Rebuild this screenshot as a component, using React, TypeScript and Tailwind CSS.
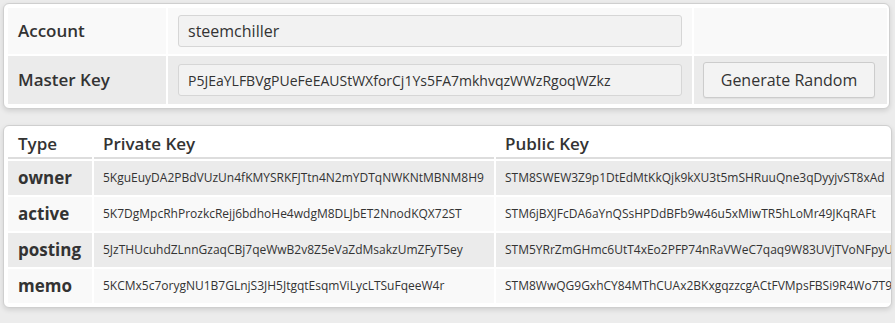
const keys = [
  {
    type: 'owner',
    priv: '5KguEuyDA2PBdVUzUn4fKMYSRKFJTtn4N2mYDTqNWKNtMBNM8H9',
    pub: 'STM8SWEW3Z9p1DtEdMtKkQjk9kXU3t5mSHRuuQne3qDyyjvST8xAd',
  },
  {
    type: 'active',
    priv: '5K7DgMpcRhProzkcRejj6bdhoHe4wdgM8DLJbET2NnodKQX72ST',
    pub: 'STM6jBXJFcDA6aYnQSsHPDdBFb9w46u5xMiwTR5hLoMr49JKqRAFt',
  },
  {
    type: 'posting',
    priv: '5JzTHUcuhdZLnnGzaqCBj7qeWwB2v8Z5eVaZdMsakzUmZFyT5ey',
    pub: 'STM5YRrZmGHmc6UtT4xEo2PFP74nRaVWeC7qaq9W83UVjTVoNFpyUc',
  },
  {
    type: 'memo',
    priv: '5KCMx5c7orygNU1B7GLnjS3JH5JtgqtEsqmViLycLTSuFqeeW4r',
    pub: 'STM8WwQG9GxhCY84MThCUAx2BKxgqzzcgACtFVMpsFBSi9R4Wo7T9',
  },
];

const font = { fontFamily: '"Open Sans", "Noto Sans", sans-serif' };

export default function App() {
  return (
    <div className="min-h-[323px] bg-[#ececec] p-[3px] text-[#333]" style={font}>
      {/* account / master key */}
      <div className="w-[887px] rounded-[6px] border border-[#cfcfcf] bg-white p-[4px] shadow-[0_2px_5px_rgba(0,0,0,0.12)]">
        <div className="grid grid-cols-[158px_524px_193px] gap-[2px]">
          <div className="flex h-[46px] items-center bg-[#f9f9f9] pl-[10px] text-[17px] font-semibold">Account</div>
          <div className="flex h-[46px] items-center bg-[#f9f9f9] pl-[10px]">
            <input
              readOnly
              value="steemchiller"
              className="h-[32px] w-[504px] rounded-[3px] border border-[#d6d6d6] bg-[#f2f2f2] px-[9px] text-[16px] text-[#333] outline-none"
              style={font}
            />
          </div>
          <div className="h-[46px] bg-[#f9f9f9]" />
          <div className="flex h-[48px] items-center bg-[#ebebeb] pl-[10px] text-[17px] font-semibold">Master Key</div>
          <div className="flex h-[48px] items-center bg-[#ebebeb] pl-[10px]">
            <input
              readOnly
              value="P5JEaYLFBVgPUeFeEAUStWXforCj1Ys5FA7mkhvqzWWzRgoqWZkz"
              className="h-[32px] w-[504px] rounded-[3px] border border-[#d6d6d6] bg-[#f2f2f2] px-[9px] text-[14px] text-[#333] outline-none"
              style={font}
            />
          </div>
          <div className="flex h-[48px] items-center bg-[#ebebeb] pl-[9px]">
            <button
              className="h-[36px] w-[172px] rounded-[3px] border border-[#cccccc] bg-[#f3f3f3] text-[16px] text-[#333] shadow-[0_1px_1px_rgba(0,0,0,0.05)]"
              style={font}
            >
              Generate Random
            </button>
          </div>
        </div>
      </div>

      {/* derived keys */}
      <div className="mt-[16px] w-[889px] overflow-hidden rounded-[6px] border border-[#cfcfcf] bg-white p-[4px] shadow-[0_2px_5px_rgba(0,0,0,0.12)]">
        <div className="grid grid-cols-[84px_400px_460px] gap-x-[2px]">
          <div className="flex h-[29px] items-center border-b-2 border-[#dddddd] pl-[10px] text-[17px] font-semibold">Type</div>
          <div className="flex h-[29px] items-center border-b-2 border-[#dddddd] pl-[9px] text-[17px] font-semibold">Private Key</div>
          <div className="flex h-[29px] items-center border-b-2 border-[#dddddd] pl-[9px] text-[17px] font-semibold">Public Key</div>
          {keys.map((k, i) => {
            const bg = i % 2 === 0 ? 'bg-[#ebebeb]' : 'bg-[#f9f9f9]';
            return [
              <div key={k.type + 't'} className={`mt-[2px] flex h-[34px] items-center pl-[10px] text-[17px] font-bold ${bg}`}>
                {k.type}
              </div>,
              <div key={k.type + 'p'} className={`mt-[2px] flex h-[34px] items-center whitespace-nowrap pl-[9px] text-[12px] ${bg}`}>
                {k.priv}
              </div>,
              <div key={k.type + 'u'} className={`mt-[2px] flex h-[34px] items-center whitespace-nowrap pl-[9px] text-[12px] ${bg}`}>
                {k.pub}
              </div>,
            ];
          })}
        </div>
      </div>
    </div>
  );
}
